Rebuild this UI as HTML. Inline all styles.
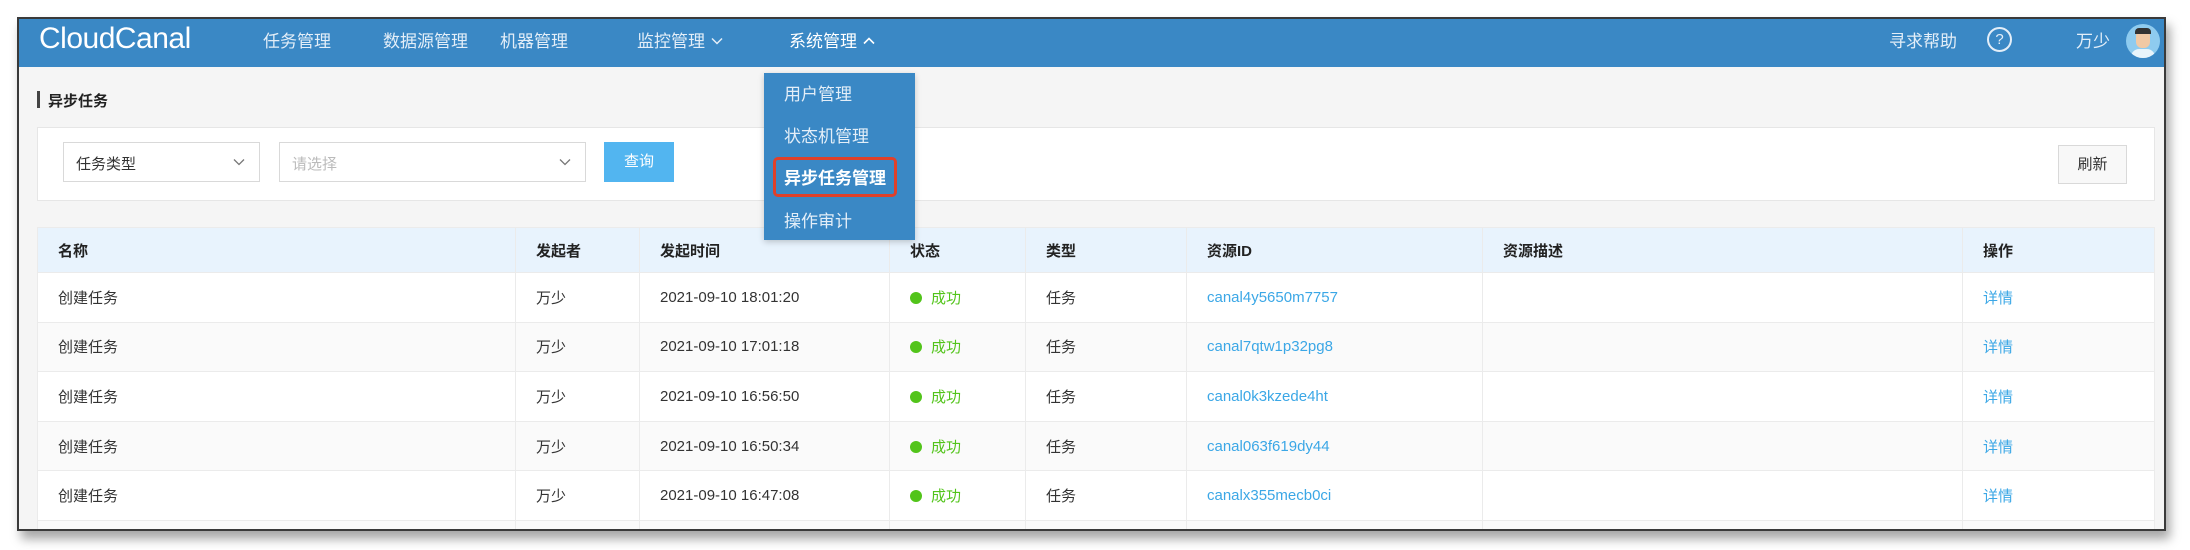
<!DOCTYPE html>
<html><head><meta charset="utf-8"><style>
*{margin:0;padding:0;box-sizing:border-box}
body{width:2190px;height:550px;background:#fff;position:relative;overflow:hidden;font-family:"Liberation Sans","Noto Sans CJK SC",sans-serif}
.frame{position:absolute;left:17px;top:17px;width:2149px;height:514px;border:2px solid #3a3a3a;background:#f5f5f5;overflow:hidden;box-shadow:4px 8px 10px rgba(0,0,0,.35)}
.hdr{position:absolute;left:0;top:0;width:100%;height:48px;background:#3a88c5}
.abs{position:absolute;white-space:nowrap}
.nav{color:#e3eef8;font-size:17px;top:8px}
.nav svg{vertical-align:2px;margin-left:6px}
.logo{left:20px;top:3px;color:#fff;font-size:30px;letter-spacing:-0.5px}
.card{position:absolute;left:18px;top:108px;width:2118px;height:74px;background:#fff;border:1px solid #e6e6e6}
.sel{position:absolute;top:14px;height:40px;border:1px solid #d9d9d9;background:#fff;font-size:15px;color:#333;padding:10px 12px}
.sel svg{position:absolute;right:14px;top:15px}
table{position:absolute;left:18px;top:208px;width:2118px;border-collapse:collapse;font-size:15px;color:#333;background:#fff}
td,th{border:1px solid #ebebeb;height:49.6px;text-align:left;padding-left:20px;font-weight:normal;white-space:nowrap}
th{background:#e8f3fd;height:45px;font-weight:bold;color:#222}
tr:nth-child(odd) td{background:#fafafa}
.ok{color:#52c41a}.dot{display:inline-block;width:12px;height:12px;border-radius:50%;background:#52c41a;margin-right:9px;vertical-align:-1px}
.lk{color:#3ba7e6}
.dd{position:absolute;left:745px;top:54px;width:151px;height:167px;background:#3a88c5;box-shadow:0 2px 6px rgba(0,0,0,.2)}
.dd div{position:absolute;left:20px;color:#e3eef8;font-size:17px}
</style></head><body>
<div class="frame">
<div class="hdr">
<div class="abs logo">CloudCanal</div>
<div class="abs nav" style="left:244px">任务管理</div>
<div class="abs nav" style="left:364px">数据源管理</div>
<div class="abs nav" style="left:481px">机器管理</div>
<div class="abs nav" style="left:618px">监控管理<svg width="12" height="8" viewBox="0 0 12 8"><path d="M1 1.5L6 6.5L11 1.5" fill="none" stroke="#e3eef8" stroke-width="1.5"/></svg></div>
<div class="abs nav" style="left:770px;color:#fff">系统管理<svg width="12" height="8" viewBox="0 0 12 8"><path d="M1 6.5L6 1.5L11 6.5" fill="none" stroke="#fff" stroke-width="1.6"/></svg></div>
<div class="abs nav" style="left:1870px">寻求帮助</div>
<div class="abs" style="left:1968px;top:8px;width:25px;height:25px;border:2px solid #e3eef8;border-radius:50%;color:#e3eef8;font-size:15px;text-align:center;line-height:21px">?</div>
<div class="abs nav" style="left:2057px">万少</div>
<div class="abs" style="left:2107px;top:5px;width:34px;height:34px;border-radius:50%;background:#8ecbef;overflow:hidden">
<div style="position:absolute;left:10px;top:6px;width:14px;height:18px;border-radius:6px;background:#f1c9a5"></div>
<div style="position:absolute;left:9px;top:4px;width:16px;height:6px;border-radius:4px 4px 0 0;background:#333"></div>
<div style="position:absolute;left:5px;top:25px;width:24px;height:12px;border-radius:8px 8px 0 0;background:#e8f4fb"></div>
</div>
</div>
<div class="abs" style="left:18px;top:72px;width:3px;height:17px;background:#444"></div>
<div class="abs" style="left:29px;top:71px;font-size:15px;font-weight:bold;color:#222">异步任务</div>
<div class="card">
<div class="sel" style="left:25px;width:197px">任务类型<svg width="12" height="8" viewBox="0 0 12 8"><path d="M1 1.5L6 6.5L11 1.5" fill="none" stroke="#777" stroke-width="1.3"/></svg></div>
<div class="sel" style="left:241px;width:307px;color:#bbb">请选择<svg width="12" height="8" viewBox="0 0 12 8"><path d="M1 1.5L6 6.5L11 1.5" fill="none" stroke="#777" stroke-width="1.3"/></svg></div>
<div class="abs" style="left:566px;top:14px;width:70px;height:40px;background:#52b5f0;color:#fff;font-size:15px;text-align:center;line-height:40px">查询</div>
<div class="abs" style="left:2020px;top:17px;width:69px;height:39px;border:1px solid #d9d9d9;background:#f8f8f8;color:#333;font-size:15px;text-align:center;line-height:37px">刷新</div>
</div>
<table>
<colgroup><col style="width:478px"><col style="width:124px"><col style="width:250px"><col style="width:136px"><col style="width:161px"><col style="width:296px"><col style="width:480px"><col></colgroup>
<tr><th>名称</th><th>发起者</th><th>发起时间</th><th>状态</th><th>类型</th><th>资源ID</th><th>资源描述</th><th>操作</th></tr>
<tr><td>创建任务</td><td>万少</td><td>2021-09-10 18:01:20</td><td class="ok"><span class="dot"></span>成功</td><td>任务</td><td class="lk">canal4y5650m7757</td><td></td><td class="lk">详情</td></tr>
<tr><td>创建任务</td><td>万少</td><td>2021-09-10 17:01:18</td><td class="ok"><span class="dot"></span>成功</td><td>任务</td><td class="lk">canal7qtw1p32pg8</td><td></td><td class="lk">详情</td></tr>
<tr><td>创建任务</td><td>万少</td><td>2021-09-10 16:56:50</td><td class="ok"><span class="dot"></span>成功</td><td>任务</td><td class="lk">canal0k3kzede4ht</td><td></td><td class="lk">详情</td></tr>
<tr><td>创建任务</td><td>万少</td><td>2021-09-10 16:50:34</td><td class="ok"><span class="dot"></span>成功</td><td>任务</td><td class="lk">canal063f619dy44</td><td></td><td class="lk">详情</td></tr>
<tr><td>创建任务</td><td>万少</td><td>2021-09-10 16:47:08</td><td class="ok"><span class="dot"></span>成功</td><td>任务</td><td class="lk">canalx355mecb0ci</td><td></td><td class="lk">详情</td></tr>
<tr><td></td><td></td><td></td><td></td><td></td><td></td><td></td><td></td></tr>
</table>
<div class="dd">
<div style="top:7px">用户管理</div>
<div style="top:49px">状态机管理</div>
<div style="position:absolute;left:9px;top:84px;width:124px;height:40px;border:3px solid #e0402a;border-radius:5px"></div>
<div style="top:91px;color:#fff;font-weight:bold">异步任务管理</div>
<div style="top:134px">操作审计</div>
</div>
</div>
</body></html>
